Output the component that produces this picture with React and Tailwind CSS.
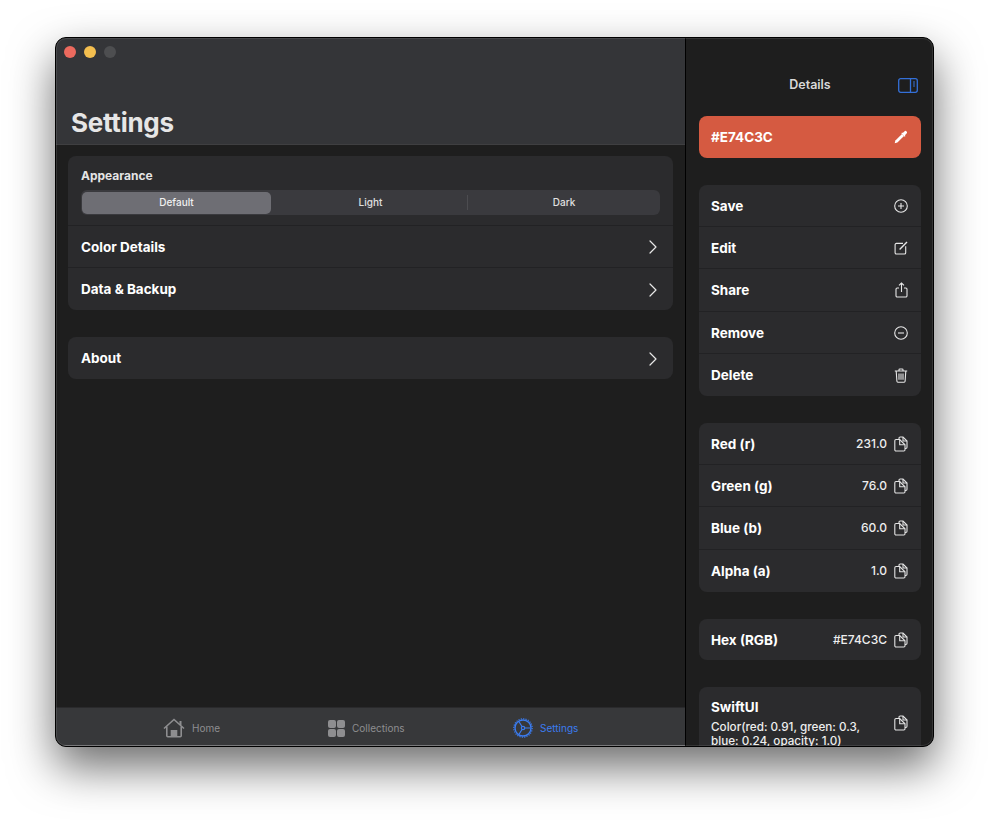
import React from "react";
import { ChevronRight } from "lucide-react";

const font = "font-['Inter','Liberation_Sans',sans-serif]";

const CopyIcon = () => (
  <svg width="14" height="16" viewBox="0 0 14 16" fill="none" stroke="#e4e4e4" strokeWidth="1.100" className="shrink-0">
    <path d="M5 3V2.200A1.200 1.200 0 0 1 6.200 1H9L13 5v6.300a1.200 1.200 0 0 1-1.200 1.200H11" />
    <path d="M9 1v4h4" />
    <path d="M2 3.500h3.700L11 8.800v5A1.200 1.200 0 0 1 9.800 15H2A1.200 1.200 0 0 1 .8 13.800V4.700A1.200 1.200 0 0 1 2 3.500Z" />
    <path d="M5.700 3.500v5.300H11" />
  </svg>
);

const PlusCircle = () => (
  <svg width="14" height="14" viewBox="0 0 14 14" fill="none" stroke="#e8e8e8" strokeWidth="1.1">
    <circle cx="7" cy="7" r="6.300" />
    <path d="M7 4v6M4 7h6" />
  </svg>
);

const MinusCircle = () => (
  <svg width="14" height="14" viewBox="0 0 14 14" fill="none" stroke="#e8e8e8" strokeWidth="1.1">
    <circle cx="7" cy="7" r="6.300" />
    <path d="M4 7h6" />
  </svg>
);

const EditIcon = () => (
  <svg width="14" height="14" viewBox="0 0 14 14" fill="none" stroke="#e8e8e8" strokeWidth="1.1">
    <path d="M9 2.400H2.400A1.300 1.300 0 0 0 1.100 3.700v8a1.300 1.300 0 0 0 1.300 1.300h8a1.300 1.300 0 0 0 1.300-1.300V5.200" />
    <path d="M5.600 8.400 13 1" strokeWidth="1.4" />
  </svg>
);

const ShareIcon = () => (
  <svg width="13" height="16" viewBox="0 0 13 16" fill="none" stroke="#e8e8e8" strokeWidth="1.1">
    <path d="M4 6H2.200A1.200 1.200 0 0 0 1 7.200v6.600A1.200 1.200 0 0 0 2.200 15h8.600a1.200 1.200 0 0 0 1.200-1.200V7.200A1.200 1.200 0 0 0 10.800 6H9" />
    <path d="M6.500 10V1M4 3.400 6.500 1 9 3.400" />
  </svg>
);

const TrashIcon = () => (
  <svg width="14" height="15" viewBox="0 0 14 15" fill="none" stroke="#e8e8e8" strokeWidth="1.1">
    <path d="M.8 3h12.400M5 3V1.800A.8.8 0 0 1 5.800 1h2.400a.8.8 0 0 1 .8.8V3" />
    <path d="M2.200 3l.7 10.300a1 1 0 0 0 1 .9h6.200a1 1 0 0 0 1-.9L11.800 3" />
    <path d="M5 5.500v6.300M7 5.500v6.300M9 5.500v6.300" />
  </svg>
);

const Row = ({ label, last, children }) => (
  <div className={`h-[42.2px] pl-3 pr-[13px] pt-[1px] flex items-center justify-between ${last ? "" : "border-b border-[#222224]"}`}>
    <span className="text-[13.5px] font-bold text-white">{label}</span>
    {children}
  </div>
);

const ValueRow = ({ label, value, last }) => (
  <Row label={label} last={last}>
    <div className="flex items-center gap-[7px]">
      <span className="text-[12px] font-medium text-[#eeeeee]">{value}</span>
      <CopyIcon />
    </div>
  </Row>
);

const SettingRow = ({ label, last }) => (
  <div className={`h-[42px] pl-[13px] pr-[8px] pt-[1px] flex items-center justify-between ${last ? "" : "border-b border-[#222224]"}`}>
    <span className="text-[13.5px] font-bold text-white">{label}</span>
    <ChevronRight size={24} strokeWidth={1.2} color="#e8e8e8" />
  </div>
);

const TabItem = ({ label, active, icon }) => (
  <div className="flex items-center gap-[7px]">
    {icon}
    <span className={`text-[10px] ${active ? "text-[#3b7cf0]" : "text-[#8e8e90]"}`}>{label}</span>
  </div>
);

export default function App() {
  return (
    <div className={`${font} w-[989px] h-[820px] bg-white pt-[37px] pl-[55px] overflow-hidden`}>
      <div className="relative w-[879px] h-[710px] rounded-[11px] border border-black overflow-hidden flex shadow-[0_20px_45px_rgba(0,0,0,0.58)] bg-[#1e1e1e]">
        {/* main column */}
        <div className="w-[629px] flex flex-col">
          <header className="h-[107px] bg-[#343538] border-b border-[#3f3f41] flex flex-col justify-between pl-[8px]">
            <div className="flex gap-2 pt-[8px]">
              <span className="w-3 h-3 rounded-full bg-[#ec6a5e]" />
              <span className="w-3 h-3 rounded-full bg-[#f4bf4f]" />
              <span className="w-3 h-3 rounded-full bg-[#4d4e50]" />
            </div>
            <h1 className="text-[26px] leading-[32px] font-bold text-[#e6e6e6] pl-[7px] pb-[5px] tracking-[-0.25px]">Settings</h1>
          </header>

          <div className="flex-1 px-3 pt-[11px] flex flex-col gap-[27px]">
            <div className="bg-[#2b2b2d] rounded-[8px]">
              <div className="h-[70px] px-[13px] pt-[12px] border-b border-[#222224]">
                <div className="text-[12px] leading-[15px] font-bold text-[#e4e4e4]">Appearance</div>
                <div className="mt-[7px] h-[25px] rounded-[6px] bg-[#3a3a3e] grid grid-cols-3 items-center text-[10px] font-medium text-[#e0e0e0]">
                  <div className="h-[22px] ml-[1px] mr-[3px] rounded-[5px] bg-[#6e6e74] flex items-center justify-center text-[#f0f0f0]">Default</div>
                  <div className="text-center">Light</div>
                  <div className="text-center border-l border-[#4c4c50]">Dark</div>
                </div>
              </div>
              <SettingRow label="Color Details" />
              <SettingRow label="Data & Backup" last />
            </div>
            <div className="bg-[#2b2b2d] rounded-[8px]">
              <SettingRow label="About" last />
            </div>
          </div>

          <nav className="h-[39px] bg-[#37383a] border-t border-[#2a2a2c] border-b border-b-[#6a6a6c] pl-[107px] pt-[3px] flex items-center">
            <div className="w-[165px]">
              <TabItem
                label="Home"
                icon={
                  <svg width="22" height="20" viewBox="0 0 22 20" fill="none" stroke="#8e8e90" strokeWidth="1.6">
                    <path d="M1 10.500 11 1.500l10 9" />
                    <path d="M3.800 8.500v9.200a1 1 0 0 0 1 1h12.400a1 1 0 0 0 1-1V8.500" />
                    <path d="M8.500 18.700v-6h5v6" fill="#8e8e90" />
                    <path d="M17.500 3v4" strokeWidth="2" />
                  </svg>
                }
              />
            </div>
            <div className="w-[185px]">
              <TabItem
                label="Collections"
                icon={
                  <div className="grid grid-cols-2 gap-[1px] w-[17px] h-[17px]">
                    <span className="bg-[#8e8e90] rounded-[2px]" />
                    <span className="bg-[#8e8e90] rounded-[2px]" />
                    <span className="bg-[#8e8e90] rounded-[2px]" />
                    <span className="bg-[#8e8e90] rounded-[2px]" />
                  </div>
                }
              />
            </div>
            <TabItem
              label="Settings"
              active
              icon={
                <svg width="20" height="20" viewBox="0 0 20 20" fill="none" stroke="#3b7cf0">
                  <circle cx="10" cy="10" r="8" strokeWidth="1.4" />
                  <circle cx="10" cy="10" r="9.200" strokeWidth="1.200" strokeDasharray="1.200 1.200" />
                  <circle cx="10" cy="10" r="1.700" strokeWidth="1.200" />
                  <path d="M11.700 10H17.500M9 8.500 6 3.800M9 11.500 6 16.200" strokeWidth="1.200" />
                </svg>
              }
            />
          </nav>
        </div>

        {/* details column */}
        <aside className="flex-1 bg-[#1e1e1e] border-l border-black pl-[13px] pr-3 overflow-hidden">
          <div className="h-[78px] relative flex items-center justify-center pt-[17px]">
            <span className="text-[12.5px] font-semibold text-[#d8d8d8]">Details</span>
            <svg width="20" height="15" viewBox="0 0 20 15" fill="none" className="absolute right-[3px] top-[40px]" stroke="#3470d8">
              <rect x=".7" y=".7" width="18.600" height="13.600" rx="2" strokeWidth="1.300" />
              <path d="M12.500 1v13" strokeWidth="1.300" />
              <path d="M15 4h2M15 6h2M15 8h2" strokeWidth="1" />
            </svg>
          </div>

          <div className="h-[42px] rounded-[8px] bg-[#d55a41] pl-3 pr-[13px] flex items-center justify-between">
            <span className="text-[13.5px] font-bold text-white">#E74C3C</span>
            <svg width="14" height="14" viewBox="0 0 14 14" fill="#ffffff">
              <path d="M8 4 1.400 10.600.7 13.300 3.400 12.600 10 6Z" />
              <path d="M7.300 3.300 10.700 6.700 11.500 5.900 10.900 5.300 12.600 3.600A1.500 1.500 0 0 0 10.400 1.400L8.700 3.100 8.100 2.500Z" />
            </svg>
          </div>

          <div className="mt-[27px] bg-[#2b2b2d] rounded-[8px]">
            <Row label="Save"><PlusCircle /></Row>
            <Row label="Edit"><EditIcon /></Row>
            <Row label="Share"><ShareIcon /></Row>
            <Row label="Remove"><MinusCircle /></Row>
            <Row label="Delete" last><TrashIcon /></Row>
          </div>

          <div className="mt-[27px] bg-[#2b2b2d] rounded-[8px]">
            <ValueRow label="Red (r)" value="231.0" />
            <ValueRow label="Green (g)" value="76.0" />
            <ValueRow label="Blue (b)" value="60.0" />
            <ValueRow label="Alpha (a)" value="1.0" last />
          </div>

          <div className="mt-[27px] h-[41px] bg-[#2b2b2d] rounded-[8px] flex flex-col justify-center">
            <ValueRow label="Hex (RGB)" value="#E74C3C" last />
          </div>

          <div className="mt-[27px] bg-[#2b2b2d] rounded-[8px] pl-3 pr-[13px] pt-[12px] pb-[18px] flex items-center justify-between">
            <div className="w-[165px]">
              <div className="text-[13.5px] leading-[17px] font-bold text-white">SwiftUI</div>
              <div className="mt-[4px] text-[11.7px] leading-[14px] font-medium text-[#eeeeee]">Color(red: 0.91, green: 0.3, blue: 0.24, opacity: 1.0)</div>
            </div>
            <CopyIcon />
          </div>
        </aside>

        {/* thin light edge of the window, sits over the panels */}
        <div className="absolute inset-0 rounded-[10px] border border-white/10 pointer-events-none" />
      </div>
    </div>
  );
}
